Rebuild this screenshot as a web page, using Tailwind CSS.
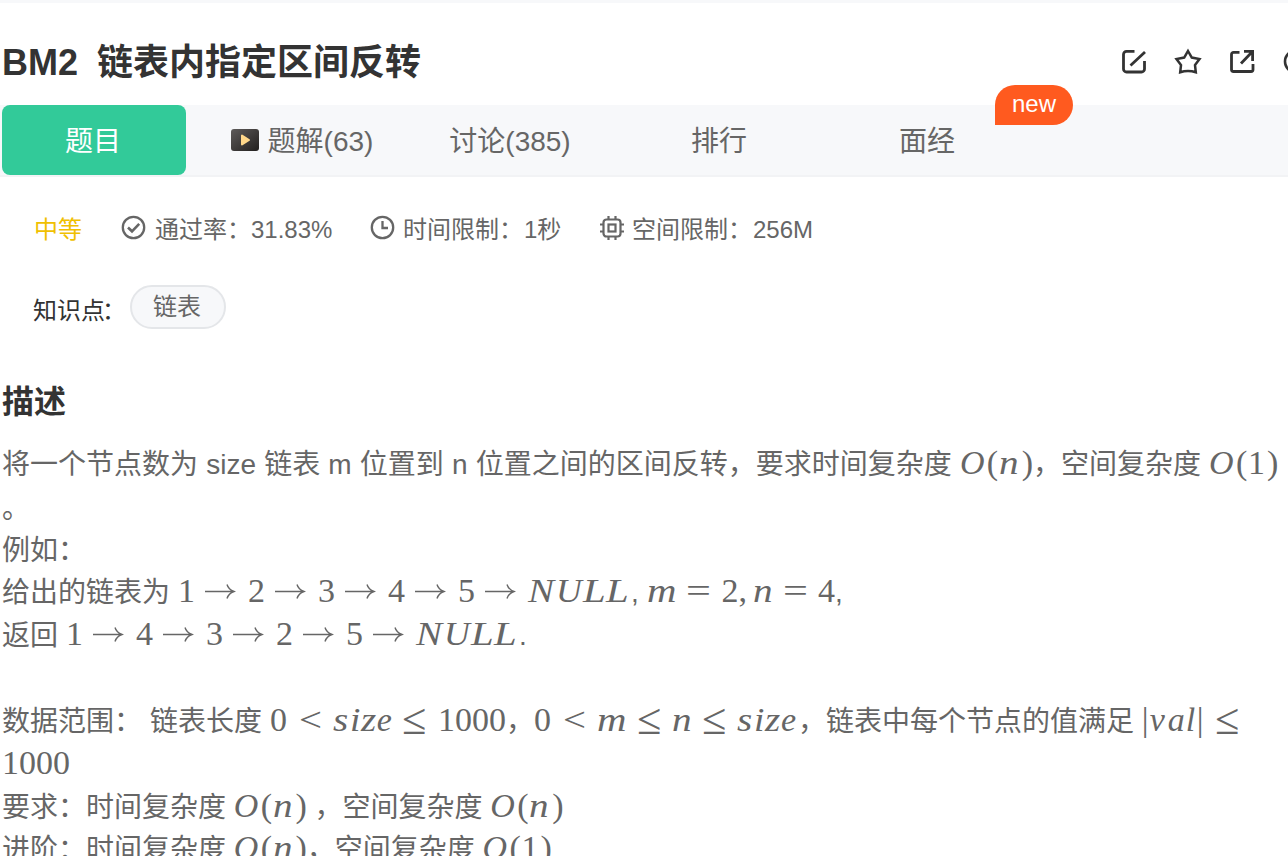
<!DOCTYPE html>
<html lang="zh-CN">
<head>
<meta charset="utf-8">
<title>BM2 链表内指定区间反转</title>
<script src="https://cdn.jsdelivr.net/npm/@tailwindcss/browser@4"></script>
</head>
<body class="h-[856px] w-[1288px] overflow-hidden bg-white font-['Liberation_Sans','Noto_Sans_CJK_SC',sans-serif] text-[#666]">
<svg class="hidden"><symbol id="arrow" viewBox="0 0 32 16"><path d="M1 8.500h29M23 1.500q1.500 5 7 7-5.500 2-7 7" fill="none" stroke="currentColor" stroke-width="1.400"/></symbol></svg>
<div class="h-[3px] bg-[#f7f8fa]"></div>

<header class="flex h-[102px] items-start justify-between overflow-hidden">
  <h1 class="mt-[34px] flex pl-[2px] text-[36px] leading-[52px] font-bold whitespace-pre text-[#333]"><span class="w-[95px]">BM2  </span><span>链表内指定区间反转</span></h1>
  <div class="-mr-[22px] mt-[44px] flex shrink-0 gap-[26px] text-[#333]">
    <svg class="size-[28px]" viewBox="0 0 28 28" fill="none" stroke="currentColor" stroke-width="2.8"><path d="M14.500 4.400H6.500a3 3 0 0 0-3 3V22a3 3 0 0 0 3 3h15a3 3 0 0 0 3-3v-8M10.500 18.500 25 5"/></svg>
    <svg class="size-[28px]" viewBox="0 0 28 28" fill="none" stroke="currentColor" stroke-width="2.500"><path d="m14 4 3.800 6.600 7.700 1.500-4.500 6 .8 7.200q-7.800-2.600-15.600 0l.8-7.200-4.500-6 7.700-1.500z"/></svg>
    <svg class="size-[28px]" viewBox="0 0 28 28" fill="none" stroke="currentColor" stroke-width="2.800"><path d="M11.500 5.400H5.500a2 2 0 0 0-2 2V22.500a2 2 0 0 0 2 2h17.500a2 2 0 0 0 2-2V17M16 4.400h8.600V14M24 5 13 16.500"/></svg>
    <svg class="size-[28px]" viewBox="0 0 28 28" fill="none" stroke="currentColor" stroke-width="2.600"><circle cx="14" cy="14.500" r="11"/></svg>
  </div>
</header>

<nav class="relative flex h-[72px] gap-6 border-b-2 border-[#f2f3f5] bg-[#f7f8fa] pl-[2px] text-[28px] leading-[74px]">
  <a class="h-[70px] w-[184px] rounded-lg bg-[#32ca99] pr-[2px] text-center text-white">题目</a>
  <a class="flex h-[70px] w-[184px] items-center justify-center gap-[9px]">
    <svg class="h-[22px] w-[28px]" viewBox="0 0 28 22"><defs><linearGradient id="g" x2="1" y2="1"><stop stop-color="#5e5b5a"/><stop offset="1" stop-color="#221f1e"/></linearGradient></defs><rect width="28" height="22" rx="3" fill="url(#g)"/><path d="M11 6.500v9l7-4.500z" fill="#ffd78a" stroke="#ffd78a" stroke-width="2" stroke-linejoin="round"/></svg>
    <span class="pt-[3px] leading-[70px]">题解(63)</span>
  </a>
  <a class="w-[184px] text-center">讨论(385)</a>
  <a class="w-[184px] pl-[2px] text-center">排行</a>
  <a class="w-[184px] pl-[2px] text-center">面经</a>
  <span class="absolute -top-[20px] left-[995px] h-[40px] w-[78px] rounded-[20px] rounded-bl-none bg-[#ff5a1f] text-center text-[24px] leading-[38px] text-white">new</span>
</nav>

<section class="flex h-[104px] items-center pl-[34px] text-[24px] leading-[36px] whitespace-nowrap">
  <span class="w-[87px] pt-[2px] text-[#f0c000]">中等</span>
  <svg class="mr-[9px] mb-[3px] size-[25px]" viewBox="0 0 25 25" fill="none" stroke="currentColor" stroke-width="2.300"><circle cx="12.500" cy="12.500" r="10.700"/><path d="m7 12.500 4 3.800 7.200-7.500" stroke-width="2.600"/></svg>
  <span class="w-[215px] pt-[2px]">通过率：31.83%</span>
  <svg class="mr-[8px] mb-[3px] size-[25px]" viewBox="0 0 25 25" fill="none" stroke="currentColor" stroke-width="2.300"><circle cx="12.500" cy="12.500" r="10.700"/><path d="M12.500 6v7H18"/></svg>
  <span class="flex w-[196px] pt-[2px]"><span class="w-[121px]">时间限制：</span>1秒</span>
  <svg class="mr-[7px] mb-[3px] size-[26px]" viewBox="0 0 26 26" fill="none" stroke="currentColor" stroke-width="2.200"><rect x="4.500" y="4.500" width="17" height="17" rx="3"/><rect x="9.500" y="9.500" width="7" height="7"/><path d="M9.500 1v3.500M16.500 1v3.500M9.500 21.500V25M16.500 21.500V25M1 9.500h3.500M1 16.500h3.500M21.500 9.500H25M21.500 16.500H25"/></svg>
  <span class="flex pt-[2px]"><span class="w-[121px]">空间限制：</span>256M</span>
</section>

<section class="flex h-[48px] items-start pt-[4px] pl-[33px] text-[24px]">
  <span class="mt-[8px] flex w-[97px] leading-[36px] whitespace-nowrap text-[#333]"><span class="w-[69px]">知识点</span><span>：</span></span>
  <span class="h-[44px] w-[96px] rounded-full border-2 border-[#e4e6e9] bg-[#f7f8fa] pr-[2px] text-center leading-[39px]">链表</span>
</section>

<h2 class="mt-[50px] pl-[2px] text-[32px] leading-[46px] font-bold text-[#333]">描述</h2>

<article class="mt-[17px] pl-[2px] text-[28px] *:flex *:h-[42.7px] *:items-baseline *:leading-[42.7px] *:whitespace-pre">
  <div class="h-[45.7px]!"><span class="w-[958px] [word-spacing:0.4px]">将一个节点数为 size 链表 m 位置到 n 位置之间的区间反转，要求时间复杂度 </span><span class="inline-flex w-[73px] font-['Liberation_Serif'] text-[34px]"><i class="w-[27px]">O</i><span class="w-[12px]">(</span><i class="w-[23px] origin-left"><span class="inline-block origin-left scale-x-115">n</span></i><span>)</span></span><span class="w-[176px]">，空间复杂度 </span><span class="inline-flex font-['Liberation_Serif'] text-[34px]"><i class="w-[27px]">O</i><span class="w-[12px]">(</span><span class="w-[19px]">1</span><span>)</span></span></div>
  <div>。</div>
  <div class="h-[39.7px]!">例如：</div>
  <div><span class="w-[176px]">给出的链表为</span><span class="inline-flex w-[453px] font-['Liberation_Serif'] text-[34px]"><span class="w-[26px]">1</span><svg class="mr-[12px] h-4 w-8 self-center"><use href="#arrow"/></svg><span class="w-[26px]">2</span><svg class="mr-[12px] h-4 w-8 self-center"><use href="#arrow"/></svg><span class="w-[26px]">3</span><svg class="mr-[12px] h-4 w-8 self-center"><use href="#arrow"/></svg><span class="w-[26px]">4</span><svg class="mr-[12px] h-4 w-8 self-center"><use href="#arrow"/></svg><span class="w-[26px]">5</span><svg class="mr-[12px] h-4 w-8 self-center"><use href="#arrow"/></svg><i class="inline-flex"><span class="w-[28px] origin-left scale-x-115">N</span><span class="w-[27px] origin-left scale-x-105">U</span><span class="w-[23px] origin-left scale-x-120">L</span><span class="origin-left scale-x-120">L</span></i></span><span class="w-[16px]">,</span><span class="inline-flex w-[188px] font-['Liberation_Serif'] text-[34px]"><i class="w-[39px] origin-left scale-x-120">m</i><span class="w-[36px] origin-left scale-x-130">=</span><span class="w-[17px]">2</span><span class="w-[15px]">,</span><i class="w-[30px] origin-left scale-x-115">n</i><span class="w-[35px] origin-left scale-x-130">=</span><span>4</span></span><span>,</span></div>
  <div><span class="w-[64px]">返回</span><span class="inline-flex w-[453px] font-['Liberation_Serif'] text-[34px]"><span class="w-[26px]">1</span><svg class="mr-[12px] h-4 w-8 self-center"><use href="#arrow"/></svg><span class="w-[26px]">4</span><svg class="mr-[12px] h-4 w-8 self-center"><use href="#arrow"/></svg><span class="w-[26px]">3</span><svg class="mr-[12px] h-4 w-8 self-center"><use href="#arrow"/></svg><span class="w-[26px]">2</span><svg class="mr-[12px] h-4 w-8 self-center"><use href="#arrow"/></svg><span class="w-[26px]">5</span><svg class="mr-[12px] h-4 w-8 self-center"><use href="#arrow"/></svg><i class="inline-flex"><span class="w-[28px] origin-left scale-x-115">N</span><span class="w-[27px] origin-left scale-x-105">U</span><span class="w-[23px] origin-left scale-x-120">L</span><span class="origin-left scale-x-120">L</span></i></span><span>.</span></div>
  <div class="h-[43.7px]!"></div>
  <div><span class="w-[148px]">数据范围：</span><span class="w-[120px]">链表长度</span><span class="inline-flex w-[236px] font-['Liberation_Serif'] text-[34px]"><span class="w-[29px]">0</span><span class="w-[34px] origin-left scale-x-120">&lt;</span><i class="inline-flex w-[70px]"><span class="w-[17px] origin-left scale-x-115">s</span><span class="w-[11px] origin-left scale-x-110">i</span><span class="w-[16px] origin-left scale-x-115">z</span><span>e</span></i><span class="w-[36px] origin-left scale-130">≤</span><span>1000</span></span><span>，</span><span class="inline-flex w-[264px] font-['Liberation_Serif'] text-[34px]"><span class="w-[29px]">0</span><span class="w-[34px] origin-left scale-x-120">&lt;</span><i class="w-[40px] origin-left scale-x-120">m</i><span class="w-[35px] origin-left scale-130">≤</span><i class="w-[30px] origin-left scale-x-115">n</i><span class="w-[35px] origin-left scale-130">≤</span><i class="inline-flex"><span class="w-[17px] origin-left scale-x-115">s</span><span class="w-[11px] origin-left scale-x-110">i</span><span class="w-[16px] origin-left scale-x-115">z</span><span>e</span></i></span><span>，链表中每个节点的值满足 </span><span class="inline-flex font-['Liberation_Serif'] text-[34px]"><span class="w-[8px]">|</span><i class="inline-flex w-[47px]"><span class="w-[18px]">v</span><span class="w-[18px]">a</span><span>l</span></i><span class="w-[18px]">|</span><span class="origin-left scale-130">≤</span></span></div>
  <div class="font-['Liberation_Serif'] text-[34px]">1000</div>
  <div><span>要求：时间复杂度 </span><span class="inline-flex w-[73px] font-['Liberation_Serif'] text-[34px]"><i class="w-[27px]">O</i><span class="w-[12px]">(</span><i class="w-[23px]"><span class="inline-block origin-left scale-x-115">n</span></i><span>)</span></span><span> ，空间复杂度 </span><span class="inline-flex font-['Liberation_Serif'] text-[34px]"><i class="w-[27px]">O</i><span class="w-[12px]">(</span><i class="w-[23px]"><span class="inline-block origin-left scale-x-115">n</span></i><span>)</span></span></div>
  <div><span>进阶：时间复杂度 </span><span class="inline-flex w-[73px] font-['Liberation_Serif'] text-[34px]"><i class="w-[27px]">O</i><span class="w-[12px]">(</span><i class="w-[23px]"><span class="inline-block origin-left scale-x-115">n</span></i><span>)</span></span><span>，空间复杂度 </span><span class="inline-flex font-['Liberation_Serif'] text-[34px]"><i class="w-[27px]">O</i><span class="w-[12px]">(</span><span class="w-[19px]">1</span><span>)</span></span></div>
</article>
</body>
</html>
